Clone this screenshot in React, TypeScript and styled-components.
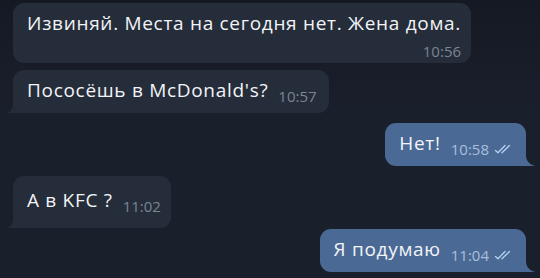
import React from "react";
import styled, { createGlobalStyle, css } from "styled-components";

const GlobalStyle = createGlobalStyle`
  html, body { margin: 0; padding: 0; background: #181d29; }
  body { font-family: "Open Sans", "Noto Sans", "DejaVu Sans", sans-serif; -webkit-font-smoothing: antialiased; }
`;

type Side = "in" | "out";

const Chat = styled.div`
  width: 540px;
  height: 278px;
  overflow: hidden;
  box-sizing: border-box;
  padding-top: 3px;
  display: flex;
  flex-direction: column;
  background: linear-gradient(180deg, #151923 0%, #1a1f2c 40%, #1a1f2c 100%);
`;

const Row = styled.div<{ $side: Side; $gap: number }>`
  display: flex;
  justify-content: ${(p) => (p.$side === "out" ? "flex-end" : "flex-start")};
  padding: 0 14px 0 13px;
  margin-top: ${(p) => p.$gap}px;
`;

const Bubble = styled.div<{ $side: Side; $stacked?: boolean; $tall?: boolean; $tail?: boolean }>`
  position: relative;
  display: flex;
  align-items: flex-end;
  box-sizing: border-box;
  border-radius: 11px;
  padding: ${(p) => (p.$tall ? "13px 10px 17px 14px" : "9px 12px 12px 14px")};
  background: ${(p) => (p.$side === "out" ? "#4a6a95" : "#252c3a")};
  color: #f2f4f7;
  ${(p) =>
    p.$stacked &&
    css`
      flex-direction: column;
      align-items: stretch;
      padding: 9px 10px 3px 14px;
    `}
  ${(p) =>
    p.$tail &&
    (p.$side === "out"
      ? css`
          border-bottom-right-radius: 0;
        `
      : css`
          border-bottom-left-radius: 0;
        `)}
`;

const Tail = styled.svg<{ $side: Side }>`
  position: absolute;
  bottom: 0;
  width: 9px;
  height: 10px;
  ${(p) =>
    p.$side === "out"
      ? css`
          right: -9px;
          fill: #4a6a95;
        `
      : css`
          left: -6px;
          width: 6px;
          height: 8px;
          fill: #252c3a;
          transform: scaleX(-1);
        `}
`;

const Text = styled.span`
  font-size: 19px;
  line-height: 22px;
  white-space: nowrap;
  letter-spacing: 0.7px;
`;

const Meta = styled.span<{ $side: Side; $stacked?: boolean }>`
  display: inline-flex;
  align-items: center;
  gap: 5px;
  font-size: 15px;
  line-height: 18px;
  white-space: nowrap;
  color: ${(p) => (p.$side === "out" ? "#a9bfdc" : "#7b8493")};
  ${(p) =>
    p.$stacked
      ? css`
          align-self: flex-end;
          margin-top: 8px;
        `
      : css`
          margin-left: 10px;
          transform: translateY(4px);
        `}
`;

const Checks = styled.svg`
  width: 20px;
  height: 10px;
  fill: none;
  stroke: #b8d2f2;
  stroke-width: 1.3;
  stroke-linecap: round;
  stroke-linejoin: round;
`;

type Msg = {
  side: Side;
  text: string;
  time: string;
  gap: number;
  stacked?: boolean;
  tall?: boolean;
  tail?: boolean;
  read?: boolean;
};

const messages: Msg[] = [
  { side: "in", text: "Извиняй. Места на сегодня нет. Жена дома.", time: "10:56", gap: 0, stacked: true },
  { side: "in", text: "Пососёшь в McDonald's?", time: "10:57", gap: 7, tail: true },
  { side: "out", text: "Нет!", time: "10:58", gap: 10, tail: true, read: true },
  { side: "in", text: "А в KFC ?", time: "11:02", gap: 10, tail: true, tall: true },
  { side: "out", text: "Я подумаю", time: "11:04", gap: 1, tail: true, read: true },
];

export default function App() {
  return (
    <>
      <GlobalStyle />
      <Chat>
        {messages.map((m, i) => (
          <Row key={i} $side={m.side} $gap={m.gap}>
            <Bubble $side={m.side} $stacked={m.stacked} $tall={m.tall} $tail={m.tail}>
              <Text>{m.text}</Text>
              <Meta $side={m.side} $stacked={m.stacked}>
                {m.time}
                {m.read && (
                  <Checks viewBox="0 0 20 10">
                    <path d="M1.5 6.5 L4 8.8 L11 1.5" />
                    <path d="M8 8.8 L15.5 1.5" />
                  </Checks>
                )}
              </Meta>
              {m.tail && (
                <Tail $side={m.side} viewBox="0 0 9 10" preserveAspectRatio="none">
                  <path d="M0 0 C0.5 5 3.5 8.6 9 10 L0 10 Z" />
                </Tail>
              )}
            </Bubble>
          </Row>
        ))}
      </Chat>
    </>
  );
}
